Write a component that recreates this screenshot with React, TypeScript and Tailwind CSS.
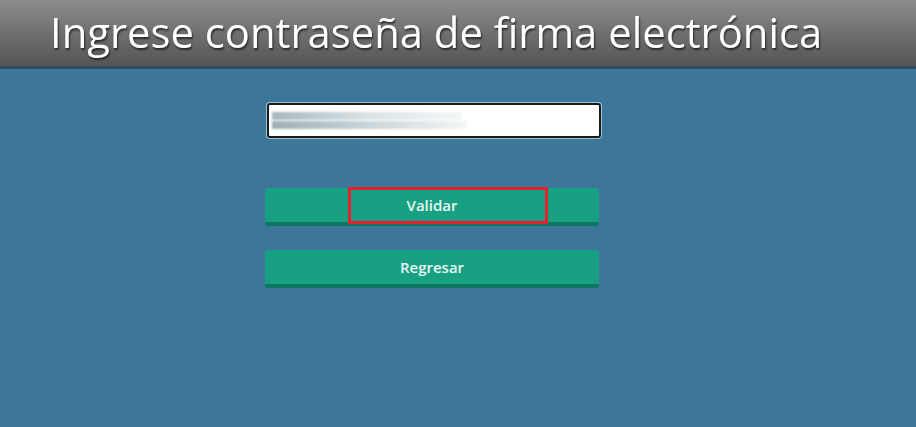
import React from 'react';

export default function App() {
  return (
    <div className="w-[916px] h-[427px] bg-[#3c7699] font-['Open_Sans',sans-serif] overflow-hidden">
      <div className="h-[69px] bg-gradient-to-b from-[#8c8c8c] to-[#555555] border-b-[3px] border-[#2c4d63] pl-[50px] flex items-center">
        <h1 className="text-white text-[42px] leading-none whitespace-nowrap origin-left scale-x-[0.995] [text-shadow:1px_2px_2px_rgba(0,0,0,0.6)] -mt-[3px]">
          Ingrese contraseña de firma electrónica
        </h1>
      </div>

      <div className="w-[336px] ml-[266px] pt-[33px]">
        <div className="w-[336px] h-[37px] rounded-[4px] bg-[#9fc4d8] p-[1px]">
          <div className="h-full rounded-[3px] border-2 border-[#1a1a1a] bg-white flex flex-col justify-center px-[3px] gap-[1px]">
            <div className="h-[8px] w-[190px] bg-gradient-to-r from-[#a9b8bd] via-[#d8e3e6] to-[#f6f8f8] blur-[1px]" />
            <div className="h-[8px] w-[195px] bg-gradient-to-r from-[#9fb0b4] via-[#c9d6d9] to-[#f4f6f6] blur-[1px]" />
          </div>
        </div>

        <div className="mt-[49px] -ml-[1px] w-[334px] flex flex-col gap-[24px]">
          <div className="relative">
            <button className="w-full h-[38px] rounded-[3px] bg-[#18a083] border-b-[4px] border-[#0e7660] text-[#e8f7f2] text-[15px] font-semibold">
              Validar
            </button>
            <div className="absolute left-[83px] top-[-1px] w-[200px] h-[37px] border-[3px] border-[#e3212b]" />
          </div>
          <button className="w-full h-[38px] rounded-[3px] bg-[#18a083] border-b-[4px] border-[#0e7660] text-[#e8f7f2] text-[15px] font-semibold">
            Regresar
          </button>
        </div>
      </div>
    </div>
  );
}
